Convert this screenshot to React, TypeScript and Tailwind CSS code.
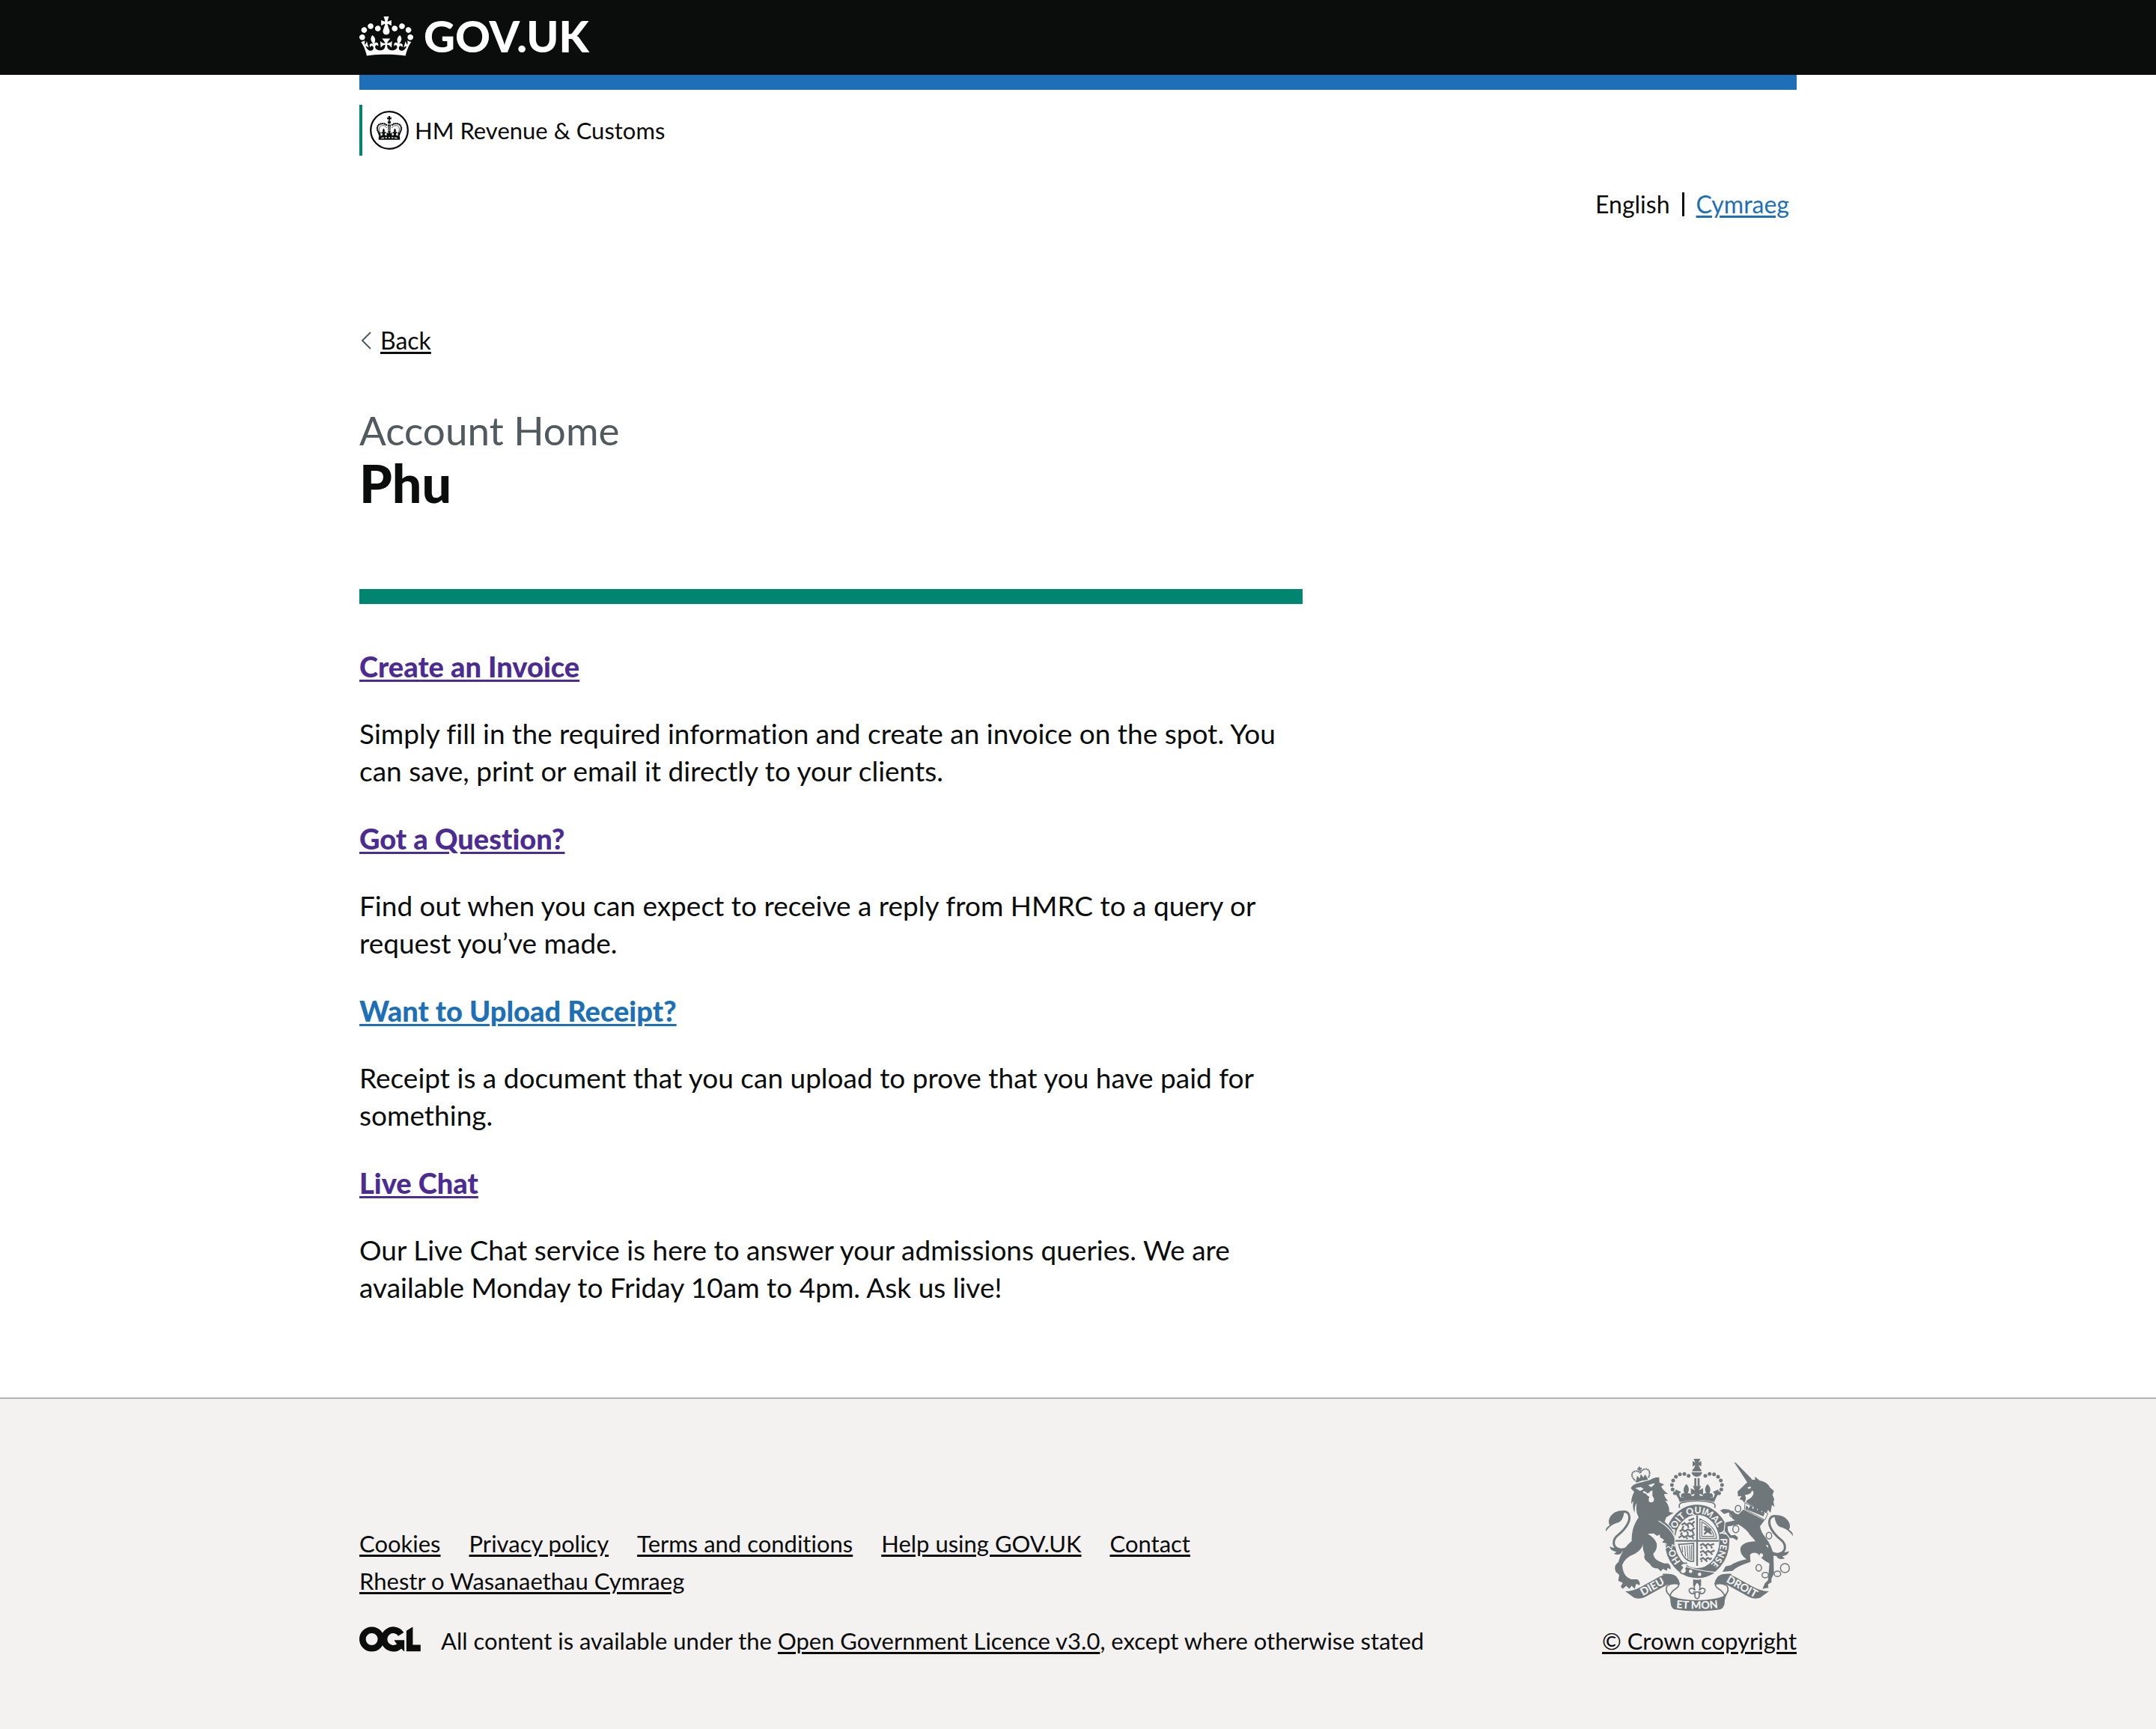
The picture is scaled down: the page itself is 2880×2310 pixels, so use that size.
import React from "react";

const FOOTER_LINKS = [
  "Cookies",
  "Privacy policy",
  "Terms and conditions",
  "Help using GOV.UK",
  "Contact",
  "Rhestr o Wasanaethau Cymraeg",
];

const SECTIONS = [
  {
    title: "Create an Invoice",
    visited: true,
    body: "Simply fill in the required information and create an invoice on the spot. You can save, print or email it directly to your clients.",
  },
  {
    title: "Got a Question?",
    visited: true,
    body: "Find out when you can expect to receive a reply from HMRC to a query or request you’ve made.",
  },
  {
    title: "Want to Upload Receipt?",
    visited: false,
    body: "Receipt is a document that you can upload to prove that you have paid for something.",
  },
  {
    title: "Live Chat",
    visited: true,
    body: "Our Live Chat service is here to answer your admissions queries. We are available Monday to Friday 10am to 4pm. Ask us live!",
  },
];

const LINK = "underline decoration-[3px] underline-offset-[3px]";

function GovCrown() {
  return (
    <svg aria-hidden="true" viewBox="0 0 132 97" className="h-[53px] w-[72px] shrink-0" fill="currentColor">
      <path
        fillRule="evenodd"
        d="M25 30.2c3.5 1.5 7.7-.2 9.1-3.7 1.5-3.6-.2-7.8-3.9-9.2-3.6-1.4-7.6.3-9.1 3.9-1.4 3.5.3 7.5 3.9 9zM9 39.5c3.6 1.5 7.8-.2 9.2-3.7 1.5-3.6-.2-7.8-3.9-9.1-3.6-1.5-7.6.2-9.1 3.8-1.4 3.5.3 7.5 3.8 9zM4.4 57.2c3.5 1.5 7.7-.2 9.1-3.8 1.5-3.6-.2-7.7-3.9-9.1-3.5-1.5-7.6.3-9.1 3.8-1.4 3.5.3 7.6 3.9 9.1zm38.3-21.4c3.5 1.5 7.7-.2 9.1-3.8 1.5-3.6-.2-7.7-3.9-9.1-3.6-1.5-7.6.3-9.1 3.8-1.3 3.6.4 7.7 3.9 9.1zm64.4-5.6c-3.6 1.5-7.8-.2-9.1-3.7-1.5-3.6.2-7.8 3.8-9.2 3.6-1.4 7.7.3 9.2 3.9 1.3 3.5-.4 7.5-3.9 9zm15.9 9.3c-3.6 1.5-7.7-.2-9.1-3.7-1.5-3.6.2-7.8 3.7-9.1 3.6-1.5 7.7.2 9.2 3.8 1.5 3.5-.3 7.5-3.8 9zm4.7 17.7c-3.6 1.5-7.8-.2-9.2-3.8-1.5-3.6.2-7.7 3.9-9.1 3.6-1.5 7.7.3 9.2 3.8 1.3 3.5-.4 7.6-3.9 9.1zM89.3 35.8c-3.6 1.5-7.8-.2-9.2-3.8-1.4-3.6.2-7.7 3.9-9.1 3.6-1.5 7.7.3 9.2 3.8 1.4 3.6-.3 7.7-3.9 9.1zM69.7 17.7l8.9 4.7V9.3l-8.9 2.8c-.2-.3-.5-.6-.9-.9L72.4 0H59.6l3.5 11.2c-.3.3-.6.5-.9.9l-8.8-2.8v13.1l8.8-4.7c.3.3.6.7.9.9l-5 15.4v.1c-.2.8-.4 1.6-.4 2.4 0 4.1 3.1 7.5 7 8.1h.2c.3 0 .7.1 1 .1.4 0 .7 0 1-.1h.2c4-.6 7.1-4.1 7.1-8.1 0-.8-.1-1.7-.4-2.4V34l-5.1-15.4c.4-.2.7-.6 1-.9zM66 92.8c16.9 0 32.8 1.1 47.1 3.2 4-16.9 8.9-26.7 14-33.5l-9.6-3.4c1 4.9 1.1 7.2 0 10.2-1.5-1.4-3-4.3-4.2-8.7L108.6 76c2.8-2 5-3.2 7.5-3.3-4.4 9.4-10 11.9-13.6 11.2-4.3-.8-6.3-4.6-5.6-7.9 1-4.7 5.7-5.9 8-.5 4.3-8.7-3-11.4-7.6-8.8 7.1-7.2 7.9-13.5 2.1-21.1-8 6.1-8.1 12.3-4.5 20.8-4.7-5.4-12.1-2.5-9.5 6.2 3.4-5.2 7.9-2 7.2 3.1-.6 4.3-6.4 7.8-13.5 7.2-10.3-.9-10.9-8-11.2-13.8 2.5-.5 7.1 1.8 11 7.3L80.2 60c-4.1 4.4-8 5.3-12.3 5.4 1.4-4.4 8-11.6 8-11.6H55.5s6.4 7.2 7.9 11.6c-4.2-.1-8-1-12.3-5.4l1.4 16.4c3.9-5.5 8.5-7.7 10.9-7.3-.3 5.8-.9 12.8-11.1 13.8-7.2.6-12.9-2.9-13.5-7.2-.7-5 3.8-8.3 7.1-3.1 2.7-8.7-4.6-11.6-9.4-6.2 3.7-8.5 3.6-14.7-4.6-20.8-5.8 7.6-5 13.9 2.2 21.1-4.7-2.6-11.9.1-7.7 8.8 2.3-5.5 7.1-4.2 8.1.5.7 3.3-1.3 7.1-5.7 7.9-3.5.7-9-1.8-13.5-11.2 2.5.1 4.7 1.3 7.5 3.3l-4.7-15.4c-1.2 4.4-2.7 7.2-4.3 8.7-1.1-3-.9-5.3 0-10.2l-9.5 3.4c5 6.9 9.9 16.7 14 33.5 14.8-2.1 30.8-3.2 47.7-3.2z"
      />
    </svg>
  );
}

function HmrcCrest() {
  return (
    <svg aria-hidden="true" viewBox="0 0 52 52" className="size-[52px] shrink-0" fill="#0b0c0c">
      <circle cx="26" cy="26" r="24.8" fill="none" stroke="#0b0c0c" strokeWidth="2.3" />
      <path d="M24.6 7h2.8l-.6 2 2-.5v3l-2-.4.5 2h-2.6l.5-2-2 .4v-3l2 .5z" />
      <circle cx="26" cy="15.4" r="2.1" />
      <path d="M24 18.5h4l-.6 10h-2.8z" />
      <path d="M25.200 20v8M26.900 20v8" stroke="#fff" strokeWidth=".6" />
      <g fill="none" stroke="#0b0c0c" strokeWidth="2.4" strokeLinecap="round" strokeDasharray=".1 2.500">
        <path d="M13 30C8.500 26 9 19.500 14 17.600C18 16.300 22 17.500 23.500 20.500" />
        <path d="M39 30C43.500 26 43 19.500 38 17.600C34 16.300 30 17.500 28.500 20.500" />
      </g>
      <g fill="none" stroke="#0b0c0c" strokeWidth=".7">
        <path d="M14.500 30C11.500 26 12 21.500 15.500 20C18.500 19 21.500 20.500 22.500 23" />
        <path d="M37.500 30C40.500 26 40 21.500 36.500 20C33.500 19 30.500 20.500 29.500 23" />
      </g>
      <path d="M18.500 23.500c1.500 2 1.700 3.200.9 5 1.600-.9 2.800.2 2.300 2-.7-.8-1.500-.6-1.900.4l1.200 2.600h-5l1.200-2.600c-.4-1-1.200-1.200-1.900-.4-.5-1.800.7-2.900 2.300-2-.8-1.800-.6-3 .9-5zM33.500 23.500c1.500 2 1.700 3.200.9 5 1.600-.9 2.800.2 2.300 2-.7-.8-1.500-.6-1.900.4l1.200 2.600h-5l1.200-2.600c-.4-1-1.200-1.200-1.900-.4-.5-1.800.7-2.900 2.300-2-.8-1.800-.6-3 .9-5z" />
      <path d="M24 27.500h4l-1.200 2.700 2.700-1.200v4.500h-7V29l2.700 1.200zM10.500 28.500l3.500 1.500.8 3.500h-2.600zM41.500 28.500L38 30l-.8 3.500h2.600z" />
      <path d="M12 33.500c9-1 19-1 28 0l.3 5.300H11.700z" />
      <path d="M15.500 36.600l3.500-.5M33 36.100l3.500.5M20.500 35.900h2.500M29 35.900h2.500M25 35.800h2" stroke="#fff" strokeWidth="1.200" />
    </svg>
  );
}

function OglLogo() {
  return (
    <svg role="img" aria-label="OGL" viewBox="0 0 484 196" className="mt-1.5 h-[34px] w-[82px] shrink-0" fill="none">
      <circle cx="98" cy="98" r="72.500" stroke="#0b0c0c" strokeWidth="51" />
      <path d="M329 59A72.500 72.500 0 1 0 316 152" stroke="#0b0c0c" strokeWidth="51" />
      <path d="M275 106h80v88h-3l-66-70zM371 32L421.500 0v143H483v51H371z" fill="#0b0c0c" />
    </svg>
  );
}

const CROWN_PEARLS = [
  [404, 149], [387, 142], [369, 143], [353, 153], [342, 168], [337, 186], [340, 204], [349, 219],
];

const CHAIN_RINGS = [
  [602, 281, 11, 13], [578, 303, 9, 11], [593, 363, 12, 14], [726, 389, 11, 13], [685, 518, 11, 13], [711, 547, 13, 11], [760, 542, 13, 11], [790, 519, 18, 18],
];

function HalfCrown() {
  return (
    <g>
      {CROWN_PEARLS.map(([x, y]) => (
        <circle key={x} cx={x} cy={y} r="7.500" />
      ))}
      <path d="M395 182c12 12 12 26 5 38 12-4 18 6 12 18-5-7-10-4-12 6h-12c-2-10-7-13-12-6-6-12 0-22 12-18-7-12-5-26 7-38z" />
      <path d="M352 204l22 10-8 8 6 18-8 2-14-24z" />
    </g>
  );
}

function Tail() {
  return (
    <g>
      <path d="M128 444C96 436 98 404 122 386C158 356 176 322 162 300C154 290 144 291 134 296" fill="none" stroke="#6f777b" strokeWidth="9" />
      <path d="M72 373C71 358 80 352 88 347C77 330 90 304 112 294Q128 286 146 290C144 312 138 330 122 337C104 341 86 352 72 373z" />
      <path d="M88 433C100 440 112 436 122 438C144 446 166 430 184 404L190 424C172 446 154 454 138 452C134 465 118 468 104 461Q112 460 114 453C100 452 90 446 88 433z" />
    </g>
  );
}

function RoyalArms() {
  return (
    <svg aria-hidden="true" viewBox="72 81 750 612" className="h-[204px] w-[250px]" fill="#6f777b">
      <defs>
        <path id="garter" d="M438 524A94 112 0 0 1 438 300A94 112 0 0 1 438 524" />
        <path id="motto" d="M340 677Q438 689 536 677" />
      </defs>

      {/* Imperial crown */}
      <path d="M424 81h27l-7 15 11-6v22l-11-6 6 13h-25l6-13-11 6V90l11 6z" />
      <path d="M418 131a19 15 0 0 1 38 0z" />
      <path d="M416 135h42a21 18 0 0 1-42 0z" />
      <path d="M427 158h8v32h-8zM440 158h8v32h-8z" />
      <path d="M421 190h33l-8 18 16-9v27l-15-5 4 14h-27l4-14-15 5v-27l16 9z" />
      <HalfCrown />
      <g transform="translate(875 0) scale(-1 1)">
        <HalfCrown />
      </g>
      <path d="M358 222Q366 238 378 236Q437 222 497 236Q510 238 518 222L507 254Q438 238 368 254z" />
      <path d="M376 257Q438 242 500 257Q514 262 508 278M376 257Q362 262 368 278" fill="none" stroke="#6f777b" strokeWidth="5" />

      {/* Garter */}
      <ellipse cx="438" cy="412" rx="109" ry="127" fill="none" stroke="#6f777b" strokeWidth="40" />
      <g fill="#f3f2f1" fontFamily="Lato, sans-serif" fontWeight="900" fontSize="37" textAnchor="middle">
        <text><textPath href="#garter" startOffset="16%">HO</textPath></text>
        <text><textPath href="#garter" startOffset="36%">SOIT</textPath></text>
        <text><textPath href="#garter" startOffset="49%">QUI</textPath></text>
        <text><textPath href="#garter" startOffset="60%">MAL</textPath></text>
        <text><textPath href="#garter" startOffset="70%">Y</textPath></text>
        <text><textPath href="#garter" startOffset="82%">PENSE</textPath></text>
      </g>
      <path d="M372 500Q400 520 438 524Q490 530 520 512L505 540Q460 566 420 556Q385 550 365 530z" />
      <path d="M386 510Q430 528 510 536" fill="none" stroke="#f3f2f1" strokeWidth="4" />
      <path d="M398 500Q376 496 370 512Q388 514 372 526Q366 542 384 542Q402 534 392 520" fill="#f3f2f1" stroke="#6f777b" strokeWidth="5" />
      <circle cx="412" cy="532" r="7" fill="#f3f2f1" />
      <circle cx="448" cy="544" r="7" fill="#f3f2f1" />

      {/* Quartered shield */}
      <path d="M438 307V510M351 410H525" stroke="#6f777b" strokeWidth="7" fill="none" />
      <g fill="none" stroke="#6f777b" strokeWidth="7" strokeLinejoin="round">
        <path d="M376 346l12-8 6 8 14-8 8 6 12-12M384 350l-6 12M400 346l4 12M418 342l6 12" />
        <path d="M368 372l12-8 8 8 14-8 10 6 16-12M378 376l-6 10M398 372l4 12M418 368l6 14" />
        <path d="M364 398l14-10 8 8 14-8 10 6 18-10M394 396l6 6M418 392l6 10" />
        <path d="M450 428l12-6 8 8 12-8 8 6 16-6M458 434l-4 8M474 432l4 10M494 432l4 8" />
        <path d="M450 456l12-6 8 8 12-8 8 6 18-8M458 462l-4 8M474 460l4 10M494 456l4 10" />
        <path d="M450 484l12-6 8 8 12-8 8 6 6-6M458 488l-4 6M474 488l4 6" />
        <path d="M404 328l22-8" />
      </g>
      <g fill="none" stroke="#6f777b" strokeWidth="3.500">
        <path d="M449 322V400H516Q512 350 449 322zM457 334V392H506Q500 358 457 334z" />
        <path d="M364 424L424 420V492Q384 498 364 424z" strokeWidth="5" />
        <path d="M378 430l2 26M388 430l4 42M398 428l4 56M408 428l2 58M416 426v60" />
      </g>
      <path d="M462 352l12-2 8 8 14 4-4 10 8 14-12-4-8-6-12 10-4-6 8-8-8-6 4-8z" />

      {/* Lion */}
      <g transform="rotate(-12 215 150)">
        <path d="M190 166C172 146 176 128 192 126Q206 125 213 138Q220 125 236 126C252 128 256 146 238 166" fill="none" stroke="#6f777b" strokeWidth="7" strokeLinecap="round" strokeDasharray="0.100 8" />
        <path d="M209 112h9l-2 6 6-2v9l-6-2 2 7h-9l2-7-6 2v-9l6 2zM192 160l6-14 8 12 8-16 8 16 8-12 6 14 2 12Q214 166 190 172z" />
      </g>
      <path d="M172 199Q180 184 196 180L250 166Q264 154 286 155L287 176L306 184L294 192Q302 208 322 222L306 222Q308 238 322 250L310 250Q328 268 326 294L344 298L314 316L308 334Q336 356 344 380Q350 402 346 428L338 422L334 440L324 430L312 438L316 420L298 416L306 406L290 396L288 384L278 390L264 380L240 382Q268 398 276 420Q280 444 262 462Q266 484 286 492L306 500L322 500Q334 510 332 524L320 518L316 530L302 522L292 532L280 520Q258 522 250 504L234 490Q222 478 228 464Q218 442 221 422Q216 446 188 462Q150 476 138 506Q140 540 158 556L174 564L198 564Q212 574 207 588L194 582L188 602L176 590L166 602L154 590L140 602L132 594L140 578L122 570L126 546L112 534Q102 510 122 496Q138 440 176 410Q174 356 204 316Q190 292 196 258Q186 270 188 298Q176 276 184 250L174 262Q174 234 186 214z" stroke="#f3f2f1" strokeWidth="7" paintOrder="stroke" />
      <path d="M284 330Q330 356 350 398" fill="none" stroke="#f3f2f1" strokeWidth="3.500" />
      <path d="M190 198l22-4 12 8-14 8zM242 186l24-7 2 4-14 12zM221 212q14-6 24 0l14-4v22q10 10 4 22-10 8-18 0-4-8 2-18l-8-6-8-8-8-2z" fill="#f3f2f1" />
      <path d="M226 210l22-8 2 12-10 6z" />
      <Tail />

      {/* Unicorn */}
      <path d="M587 96l6 1 65 66-18 14z" />
      <path d="M636 178L656 164L670 166L670 152L688 168Q720 174 730 196L746 210L740 226L747 242L744 254L748 274L738 266L732 298L722 286L716 300L634 256Q634 248 648 240L660 228L664 212Q652 222 630 226L634 240L628 258L618 246L608 244L616 230L602 232L600 212z" />
      <path d="M640 196l12-4 2 6-10 4zM634 234q18-8 24-26 10 6 4 18-8 16-28 22 4-8 0-14z" fill="#f3f2f1" />
      <path d="M624 284L708 328L690 352Q694 376 712 396Q740 432 744 470L746 540L736 562L736 576L722 584L724 598L700 602L710 580L722 568L728 500Q700 488 682 462Q660 452 650 466L652 494Q596 512 580 530L540 534L552 512L572 508Q600 490 636 484Q608 464 612 438Q620 414 672 412Q662 398 650 386Q640 366 604 344L574 350L560 352L562 372L574 388L590 386L602 396L598 408L582 398L570 398L548 370L552 336L590 328L580 322Q574 300 564 296L546 302L530 288L544 282L566 284Q588 300 604 304Q610 296 624 284z" stroke="#f3f2f1" strokeWidth="7" paintOrder="stroke" />
      <path d="M630 258L722 300L710 326L628 282z" fill="#f3f2f1" stroke="#6f777b" strokeWidth="3" />
      <path d="M632 282l2-14 8 6 2 8 8-16 8 10 0 8 10-14 8 10v8l10-12 8 10-1 10 9-8 4 12-4 12z" />
      <g fill="none" stroke="#6f777b" strokeWidth="4.500">
        {CHAIN_RINGS.map(([x, y, rx, ry]) => (
          <ellipse key={x} cx={x} cy={y} rx={rx} ry={ry} />
        ))}
      </g>
      <ellipse cx="716" cy="434" rx="7" ry="8" fill="#f3f2f1" />
      <ellipse cx="695" cy="468" rx="7" ry="8" fill="#f3f2f1" />
      <g transform="translate(894 18) scale(-1 1)">
        <Tail />
      </g>

      {/* Badge beneath the garter */}
      <path d="M422 564Q438 568 454 564V590H422z" />
      <path d="M438 574Q456 590 446 608Q462 592 470 606Q470 620 456 622L446 620Q450 640 438 642Q426 640 430 620L420 622Q406 620 406 606Q414 592 430 608Q420 590 438 574z" fill="#f3f2f1" stroke="#6f777b" strokeWidth="5" />
      <path d="M422 615h32" stroke="#6f777b" strokeWidth="5" />

      {/* Motto scroll */}
      <path d="M150 612Q180 612 214 594L290 552Q330 534 354 552L370 584Q350 576 318 586L232 634Q212 646 186 638z" />
      <path d="M726 612Q696 612 662 594L586 552Q546 534 522 552L506 584Q526 576 558 586L644 634Q664 646 690 638z" />
      <path d="M300 545Q350 540 362 568Q372 592 352 602Q334 612 330 630Q306 612 318 590Q340 576 364 584" fill="none" stroke="#6f777b" strokeWidth="5" />
      <path d="M576 545Q526 540 514 568Q504 592 524 602Q542 612 548 630Q570 612 558 590Q536 576 512 584" fill="none" stroke="#6f777b" strokeWidth="5" />
      <path d="M324 624Q352 646 438 648Q524 646 558 624Q548 640 548 662Q544 680 530 685Q438 698 348 685Q334 680 332 660Q332 640 324 624z" />
      <g fill="#f3f2f1" fontFamily="Lato, sans-serif" fontWeight="900" fontSize="43" textAnchor="middle">
        <text transform="translate(265 606) rotate(-29)">DIEU</text>
        <text transform="translate(611 606) rotate(29)">DROIT</text>
        <text><textPath href="#motto" startOffset="50%">ET MON</textPath></text>
      </g>
    </svg>
  );
}

export default function App() {
  return (
    <div className="flex min-h-screen flex-col bg-white font-['Lato',sans-serif] text-[31px] leading-[50px] text-[#0b0c0c] [font-variant-ligatures:none]">
      <header>
        <div className="bg-[#0b0c0c] px-8 text-white">
          <div className="mx-auto flex h-[100px] max-w-[1920px] items-center">
            <a href="#" className="mb-1 flex items-center gap-3.5">
              <GovCrown />
              <span className="text-[58px] leading-[58px] font-black">GOV.UK</span>
            </a>
          </div>
        </div>
        <div className="px-8">
          <div className="mx-auto max-w-[1920px]">
            <div className="h-5 bg-[#1d70b8]" />
            <div className="mt-5 flex h-[68px] items-center gap-2 border-l-4 border-[#008670] pl-2.5">
              <HmrcCrest />
              <span>HM Revenue &amp; Customs</span>
            </div>
            <nav aria-label="Language" className="mt-10 flex items-center justify-end pr-2.5 text-[32px]">
              <span className="mr-4 border-r-[3px] border-[#0b0c0c] pr-4 leading-8">English</span>
              <a href="#" className={`${LINK} text-[#1d70b8]`}>Cymraeg</a>
            </nav>
          </div>
        </div>
      </header>

      <main className="px-8">
        <div className="mx-auto max-w-[1920px]">
          <a href="#" className="mt-[132px] flex w-fit items-center gap-3 text-[32px]">
            <svg aria-hidden="true" viewBox="0 0 16 24" className="h-6 w-4" fill="none" stroke="#505a5f" strokeWidth="2">
              <path d="M15 1L4 12l11 11" />
            </svg>
            <span className={LINK}>Back</span>
          </a>
          <div className="w-full max-w-[1260px]">
            <h1 className="mt-[65px]">
              <span className="block text-[53px] leading-[60px] text-[#505a5f]">Account Home</span>
              <span className="block text-[70px] leading-[80px] font-black">Phu</span>
            </h1>
            <div className="mt-[102px] h-5 bg-[#008670]" />
            <div className="mt-[58px] flex flex-col gap-10 text-[37px]">
              {SECTIONS.map((section) => (
                <section key={section.title} className="flex flex-col gap-10">
                  <h2 className="text-[38px] font-black">
                    <a href="#" className={`${LINK} ${section.visited ? "text-[#4c2c92]" : "text-[#1d70b8]"}`}>
                      {section.title}
                    </a>
                  </h2>
                  <p>{section.body}</p>
                </section>
              ))}
            </div>
          </div>
        </div>
      </main>

      <footer className="mt-[122px] flex-1 border-t-2 border-[#b1b4b6] bg-[#f3f2f1] px-8 pt-20 pb-20">
        <div className="mx-auto flex max-w-[1920px] items-end justify-between">
          <div className="pr-40">
            <ul className="mb-[30px] flex flex-wrap gap-x-[38px]">
              {FOOTER_LINKS.map((label) => (
                <li key={label}>
                  <a href="#" className={LINK}>{label}</a>
                </li>
              ))}
            </ul>
            <div className="flex items-start gap-[27px]">
              <OglLogo />
              <p>
                All content is available under the <a href="#" className={LINK}>Open Government Licence v3.0</a>, except where otherwise stated
              </p>
            </div>
          </div>
          <a href="#" className={`${LINK} flex shrink-0 flex-col items-center gap-3.5`}>
            <RoyalArms />
            <span>© Crown copyright</span>
          </a>
        </div>
      </footer>
    </div>
  );
}
